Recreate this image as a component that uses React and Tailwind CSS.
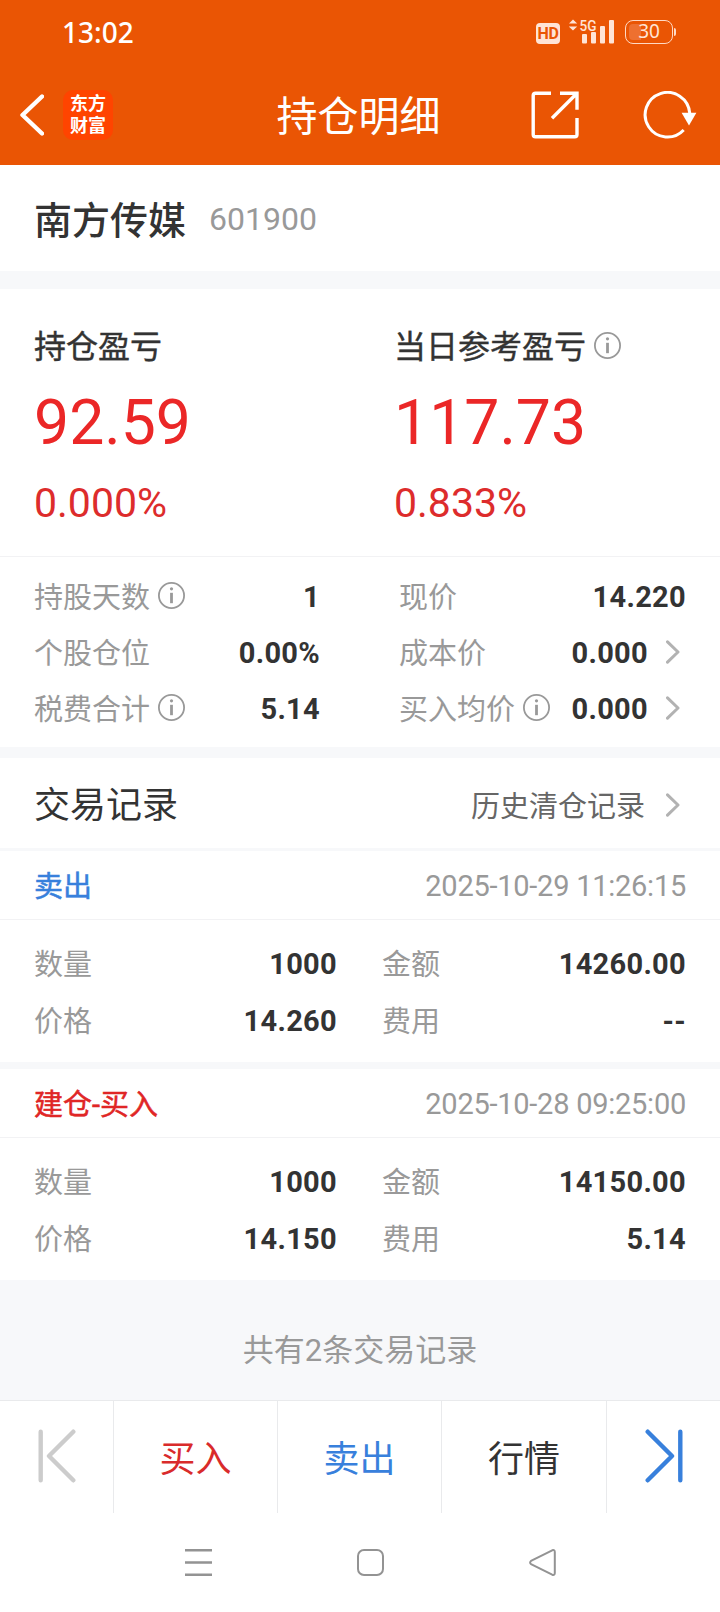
import React from 'react';

const trades = [
    {
        type: '卖出',
        side: 'sell',
        time: '2025-10-29 11:26:15',
        quantity: '1000',
        amount: '14260.00',
        price: '14.260',
        fee: '--',
    },
    {
        type: '建仓-买入',
        side: 'buy',
        time: '2025-10-28 09:25:00',
        quantity: '1000',
        amount: '14150.00',
        price: '14.150',
        fee: '5.14',
    },
];

const InfoIcon = () => (
    <svg className="w-[27px] h-[27px] ml-2 mb-[3px] shrink-0" viewBox="0 0 27 27" fill="none">
        <circle cx="13.5" cy="13.5" r="12.6" stroke="#999" strokeWidth="1.8" />
        <circle cx="13.5" cy="6.8" r="1.6" fill="#999" />
        <path d="M13.5 10.8V21.2" stroke="#999" strokeWidth="2.8" />
    </svg>
);

const Chevron = () => (
    <svg className="w-[14px] h-6 ml-[18px] mr-[6px] mb-[3px] shrink-0" viewBox="0 0 14 24" fill="none">
        <path d="M1.5 1.8L12 12L1.5 22.2" stroke="#b2b2b2" strokeWidth="3" strokeLinecap="round" strokeLinejoin="round" />
    </svg>
);

const StatusBar = () => (
    <div className="h-16 flex items-center justify-between pl-[62px] pr-[44px]">
        <span className="font-['Noto_Sans',sans-serif] font-medium text-[28px] leading-8 text-white">13:02</span>
        <div className="flex items-center">
            <span className="w-6 h-[21px] mt-[3px] rounded-[4px] bg-[#ffe4d6] text-[#ea5504] text-[16px] leading-[21px] font-bold text-center tracking-tight">
                HD
            </span>
            <svg className="w-[46px] h-[34px] mb-[2px] ml-[9px] mr-[10px]" viewBox="0 -5 46 34" fill="#ffe4d6">
                <path d="M4 0.5L8.2 4.6H-0.2ZM4 11.6L-0.2 7.5H8.2Z" />
                <text x="10.5" y="11.8" fontFamily="Roboto, sans-serif" fontSize="15.5" fontWeight="500" textLength="17" lengthAdjust="spacingAndGlyphs">5G</text>
                <rect x="13" y="15" width="5" height="9.5" rx="1" />
                <rect x="22" y="13" width="5" height="11.5" rx="1" />
                <rect x="31" y="7" width="5" height="17.5" rx="1" />
                <rect x="40" y="1" width="5" height="23.5" rx="1" />
            </svg>
            <div className="flex items-center gap-px">
                <div className="relative w-12 h-6 rounded-[8px] border-[1.5px] border-[#ffd9c4] text-center">
                    <span className="absolute left-[3px] top-[3px] w-3 h-4 rounded-l-[4px] bg-[#ee7030]" />
                    <span className="relative block font-['Noto_Sans',sans-serif] text-[19px] leading-[21px] text-[#ffe4d6]">30</span>
                </div>
                <span className="w-[2px] h-2 rounded-r bg-[#ffd9c4]" />
            </div>
        </div>
    </div>
);

const Header = () => (
    <header className="h-[165px] bg-[#ea5504]">
        <StatusBar />
        <div className="h-[101px] grid grid-cols-[1fr_auto_1fr] items-center pl-5 pr-[23px]">
            <div className="flex items-center">
                <svg className="w-6 h-[42px]" viewBox="0 0 24 42" fill="none">
                    <path d="M22 2.5L2.5 21L22 39.5" stroke="#fff" strokeWidth="4.4" strokeLinecap="round" strokeLinejoin="round" />
                </svg>
                <div className="w-[50px] h-[50px] ml-[19px] pt-[3px] rounded-[10px] bg-[#ff4400] text-white text-[18px] leading-[22px] font-bold text-center">
                    <div>东方</div>
                    <div>财富</div>
                </div>
            </div>
            <h1 className="pt-[5px] text-[41px] leading-[50px] text-white">持仓明细</h1>
            <div className="flex items-center justify-end">
                <svg className="w-12 h-12" viewBox="0 0 48 48" fill="none" stroke="#fff" strokeWidth="3.4" strokeLinejoin="round">
                    <path d="M20 2.2H4.5Q2.2 2.2 2.2 4.5V43.5Q2.2 45.8 4.5 45.8H43.8Q46 45.8 46 43.5V27" />
                    <path d="M29 2.2H46V18.8M46 2.2L21 27.2" strokeLinejoin="miter" />
                </svg>
                <svg className="w-[54px] h-12 ml-16" viewBox="0 0 54 48" fill="none">
                    <path d="M46.7 22A22.3 22.3 0 1 0 40.7 39" stroke="#fff" strokeWidth="3" />
                    <path d="M38.6 21.8H53.4L46 34.4Z" fill="#fff" />
                </svg>
            </div>
        </div>
    </header>
);

const ProfitBlock = ({ label, value, percent, info }) => (
    <div className="pl-[34px] pt-[38px]">
        <div className="h-10 flex items-center text-[32px] leading-10 [-webkit-text-stroke:0.4px] text-[#333]">
            {label}
            {info && <InfoIcon />}
        </div>
        <div className="mt-[21px] text-[62.5px] leading-[70px] text-[#eb2727]">{value}</div>
        <div className="mt-5 text-[41px] leading-[50px] text-[#dd2c2c]">{percent}</div>
    </div>
);

const Field = ({ label, value, info, link }) => (
    <div className="h-full flex items-center text-[29px] leading-10">
        <span className="pt-[2px] text-[#999]">{label}</span>
        {info && <InfoIcon />}
        <span className="ml-auto font-bold tracking-[0.3px] text-[#333]">{value}</span>
        {link && <Chevron />}
    </div>
);

const TradeRecord = ({ trade }) => (
    <section className="bg-white">
        <div className="h-[69px] flex items-center justify-between px-[34px] pt-[2px] border-b border-[#f2f2f4] text-[29px] leading-10">
            <span className={`pt-[2px] [-webkit-text-stroke:0.5px] ${trade.side === 'sell' ? 'text-[#3880dc]' : 'text-[#e02626]'}`}>
                {trade.type}
            </span>
            <span className="tracking-[-0.25px] text-[#999]">{trade.time}</span>
        </div>
        <div className="h-[142px] grid grid-cols-[303px_304px] auto-rows-[57px] gap-x-[45px] px-[34px] pt-[15px]">
            <Field label="数量" value={trade.quantity} />
            <Field label="金额" value={trade.amount} />
            <Field label="价格" value={trade.price} />
            <Field label="费用" value={trade.fee} />
        </div>
    </section>
);

const BottomBar = () => (
    <nav className="h-[113px] grid grid-cols-[114px_164px_164px_165px_113px] border-t border-[#e9eaec] bg-white text-[36px] leading-[44px]">
        <div className="flex items-center justify-center border-r border-[#e9eaec] pb-[3px]">
            <svg className="w-[38px] h-[54px]" viewBox="0 0 38 54" fill="none" stroke="#ccc" strokeWidth="4.4" strokeLinecap="round" strokeLinejoin="round">
                <path d="M2.7 2.7V51.3M35.3 2.7L11 27L35.3 51.3" />
            </svg>
        </div>
        <button className="pt-[5px] border-r border-[#e9eaec] text-[#d92b2b]">买入</button>
        <button className="pt-[5px] border-r border-[#e9eaec] text-[#3880dc]">卖出</button>
        <button className="pt-[5px] border-r border-[#e9eaec] text-[#333]">行情</button>
        <div className="flex items-center justify-center pb-[3px]">
            <svg className="w-[38px] h-[54px]" viewBox="0 0 38 54" fill="none" stroke="#3880dc" strokeWidth="4.4" strokeLinecap="round" strokeLinejoin="round">
                <path d="M35.3 2.7V51.3M2.7 2.7L27 27L2.7 51.3" />
            </svg>
        </div>
    </nav>
);

const SystemNav = () => (
    <div className="h-[99px] flex items-center justify-center gap-[145px] pl-[21px] bg-white">
        <svg className="w-[27px] h-[27px]" viewBox="0 0 27 27" stroke="#939393" strokeWidth="2.4">
            <path d="M0 1.3H27M0 13.5H27M0 25.7H27" />
        </svg>
        <svg className="w-[27px] h-[27px]" viewBox="0 0 27 27" fill="none" stroke="#939393" strokeWidth="2">
            <rect x="1" y="1" width="25" height="25" rx="6" />
        </svg>
        <svg className="w-[27px] h-[27px]" viewBox="0 0 27 27" fill="none" stroke="#939393" strokeWidth="2" strokeLinejoin="round">
            <path d="M2 11.9L23.2 1.3Q25.8 0.4 25.8 3V24Q25.8 26.6 23.2 25.7L2 15.1Q0.2 13.5 2 11.9Z" />
        </svg>
    </div>
);

const App = () => {
    return (
        <div className="w-[720px] h-[1612px] overflow-hidden bg-[#f7f8fa] font-['Roboto','Noto_Sans_CJK_SC',sans-serif]">
            <Header />

            <section className="h-[106px] flex items-center px-[34px] bg-white">
                <h2 className="pt-[5px] text-[38px] leading-[46px] font-medium text-[#333]">南方传媒</h2>
                <span className="ml-[23px] pt-[2px] text-[32px] leading-10 text-[#999]">601900</span>
            </section>

            <section className="h-[268px] mt-[18px] grid grid-cols-2 border-b border-[#f2f2f4] bg-white">
                <ProfitBlock label="持仓盈亏" value="92.59" percent="0.000%" />
                <ProfitBlock label="当日参考盈亏" value="117.73" percent="0.833%" info />
            </section>

            <section className="h-[190px] grid grid-cols-[286px_287px] auto-rows-[56px] gap-x-[79px] px-[34px] pt-3 bg-white">
                <Field label="持股天数" value="1" info />
                <Field label="现价" value="14.220" />
                <Field label="个股仓位" value="0.00%" />
                <Field label="成本价" value="0.000" link />
                <Field label="税费合计" value="5.14" info />
                <Field label="买入均价" value="0.000" info link />
            </section>

            <section className="h-[90px] mt-[11px] flex items-center justify-between px-[34px] pt-[6px] bg-white">
                <h3 className="text-[36px] leading-[44px] text-[#333]">交易记录</h3>
                <div className="flex items-center text-[29px] leading-10 text-[#666]">
                    <span className="pt-[2px] mr-[3px]">历史清仓记录</span>
                    <Chevron />
                </div>
            </section>

            <div className="mt-[3px] flex flex-col gap-[7px]">
                {trades.map((trade) => (
                    <TradeRecord key={trade.time} trade={trade} />
                ))}
            </div>

            <p className="h-[120px] pt-[51px] text-center text-[31px] leading-10 text-[#999]">共有2条交易记录</p>

            <BottomBar />
            <SystemNav />
        </div>
    );
};

export default App;
